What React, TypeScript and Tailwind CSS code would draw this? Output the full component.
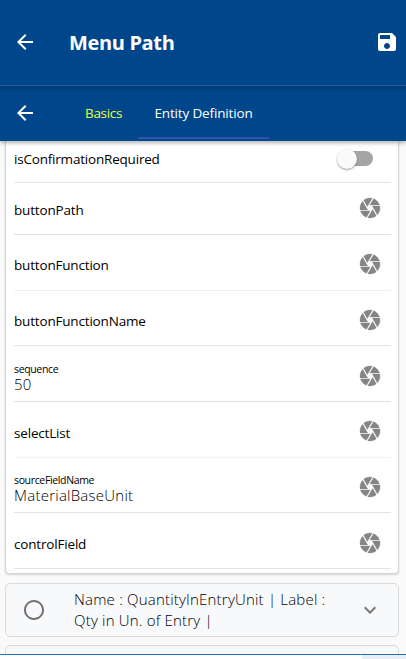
import { MdArrowBack, MdSave, MdRadioButtonUnchecked, MdExpandMore } from "react-icons/md";

type Field = { label: string; value?: string; row: string; labelPad: string };

const fields: Field[] = [
  { label: "buttonPath", row: "h-[52px] border-[#e3e3e3]", labelPad: "pt-[3px]" },
  { label: "buttonFunction", row: "h-14 border-[#f0f0f0] pt-[3px]", labelPad: "pt-px" },
  { label: "buttonFunctionName", row: "h-[55px] border-[#e3e3e3] pt-[5px]", labelPad: "pt-px" },
  { label: "sequence", value: "50", row: "h-14 border-[#e0e0e0] pt-[5px]", labelPad: "pt-0.5" },
  { label: "selectList", row: "h-14 border-[#f2f2f2] pt-[3px]", labelPad: "pt-[3px]" },
  { label: "sourceFieldName", value: "MaterialBaseUnit", row: "h-[55px] border-[#e3e3e3] pt-[5px]", labelPad: "pt-px" },
  { label: "controlField", row: "h-14 border-[#e3e3e3] pt-[5px]", labelPad: "pt-px" },
];

function ApertureIcon() {
  return (
    <svg viewBox="0 0 24 24" className="mr-[9px] mb-px size-6 fill-[#858585] stroke-[#858585] stroke-[0.3]">
      <path d="M9.4 10.5l4.77-8.26C13.47 2.09 12.75 2 12 2c-2.4 0-4.6.85-6.32 2.25l3.66 6.35.06-.1zM21.54 9c-.92-2.92-3.15-5.26-6-6.34L11.88 9h9.66zm.26 1h-7.49l.29.5 4.76 8.25C21 16.97 22 14.61 22 12c0-.69-.07-1.35-.2-2zM8.54 12l-3.9-6.75C3.01 7.03 2 9.39 2 12c0 .69.07 1.35.2 2h7.49l-1.15-2zm-6.08 3c.92 2.92 3.15 5.26 6 6.34L12.12 15H2.46zm11.27 0l-3.9 6.76c.7.15 1.42.24 2.17.24 2.4 0 4.6-.85 6.32-2.25l-3.66-6.35-.93 1.6z" />
    </svg>
  );
}

function FieldRow({ field }: { field: Field }) {
  return (
    <div className={`flex items-center justify-between border-b ${field.row}`}>
      {field.value ? (
        <div className={field.labelPad}>
          <div className="text-[10.5px] leading-[15px] tracking-[-0.35px] text-black">{field.label}</div>
          <div className="text-[15px] leading-[15px] font-light tracking-[0.25px] text-black">{field.value}</div>
        </div>
      ) : (
        <span className={`text-[13.5px] leading-5 tracking-[-0.18px] text-black ${field.labelPad}`}>{field.label}</span>
      )}
      <ApertureIcon />
    </div>
  );
}

export default function App() {
  return (
    <div className="flex h-[659px] w-[406px] flex-col overflow-hidden bg-[#fafafa] font-['Open_Sans','Noto_Sans',sans-serif]">
      <header className="flex h-[86px] shrink-0 items-center border-b border-[#30609d] bg-[#00468b] pr-[7px] pb-0.5 pl-[13px] text-white">
        <MdArrowBack className="size-6" />
        <h1 className="ml-8 flex-1 pt-0.5 text-[20px] font-bold tracking-[-0.35px]">Menu Path</h1>
        <MdSave className="size-6" />
      </header>
      <nav className="z-10 flex h-[55px] shrink-0 items-center bg-[#00468b] bg-linear-to-b from-[#003b77] to-[#00468b] to-[6px] pb-px pl-[13px] text-[13.5px] text-white shadow-[0_2px_4px_rgba(0,0,0,0.3)]">
        <MdArrowBack className="size-6" />
        <span className="ml-12 w-[53px] tracking-[-0.3px] text-[#e8ff45]">Basics</span>
        <span className="flex h-[51px] w-[131px] items-center justify-center border-t-2 border-b-2 border-t-transparent border-b-[#3352ad] tracking-[-0.15px]">
          Entity Definition
        </span>
      </nav>
      <main className="flex flex-1 flex-col overflow-hidden px-[5px]">
        <section className="h-[433px] w-[394px] shrink-0 rounded-b-[4px] border border-t-0 border-[#d5d5d5] bg-white pr-[7px] pl-2 shadow-[0_1px_2px_rgba(0,0,0,0.16)]">
          <div className="flex h-[42px] items-center justify-between border-b border-[#e5e5e5]">
            <span className="pb-1.5 text-[13.5px] leading-5 tracking-[-0.2px]">isConfirmationRequired</span>
            <div className="mr-[18px] mb-1.5 flex h-[15px] w-[34px] items-center rounded-full bg-[#a5a5a5]">
              <span className="-ml-0.5 size-5 shrink-0 rounded-full bg-[#fafafa] shadow-[0_1px_2px_rgba(0,0,0,0.4)]" />
            </div>
          </div>
          {fields.map((field) => <FieldRow key={field.label} field={field} />)}
        </section>
        <section className="mt-[9px] flex h-[54px] w-[394px] shrink-0 items-center rounded-[5px] border border-[#dadada] bg-[#f8f9fb] pl-4 text-black">
          <MdRadioButtonUnchecked className="size-6 text-[#737373]" />
          <p className="ml-7 flex-1 text-[15px] leading-[21px] font-light tracking-[0.2px]">
            Name : QuantityInEntryUnit | Label :<br />Qty in Un. of Entry |
          </p>
          <MdExpandMore className="mr-4 size-6 text-[#777]" />
        </section>
        <section className="mt-2 h-9 w-[394px] shrink-0 rounded-[5px] border border-[#ddd9d4] bg-[#f8f9fb]" />
      </main>
      <footer className="flex h-[5px] shrink-0 justify-end border-t border-[#236fae] bg-white">
        <span className="w-11 bg-[#e8eef6]" />
      </footer>
    </div>
  );
}
